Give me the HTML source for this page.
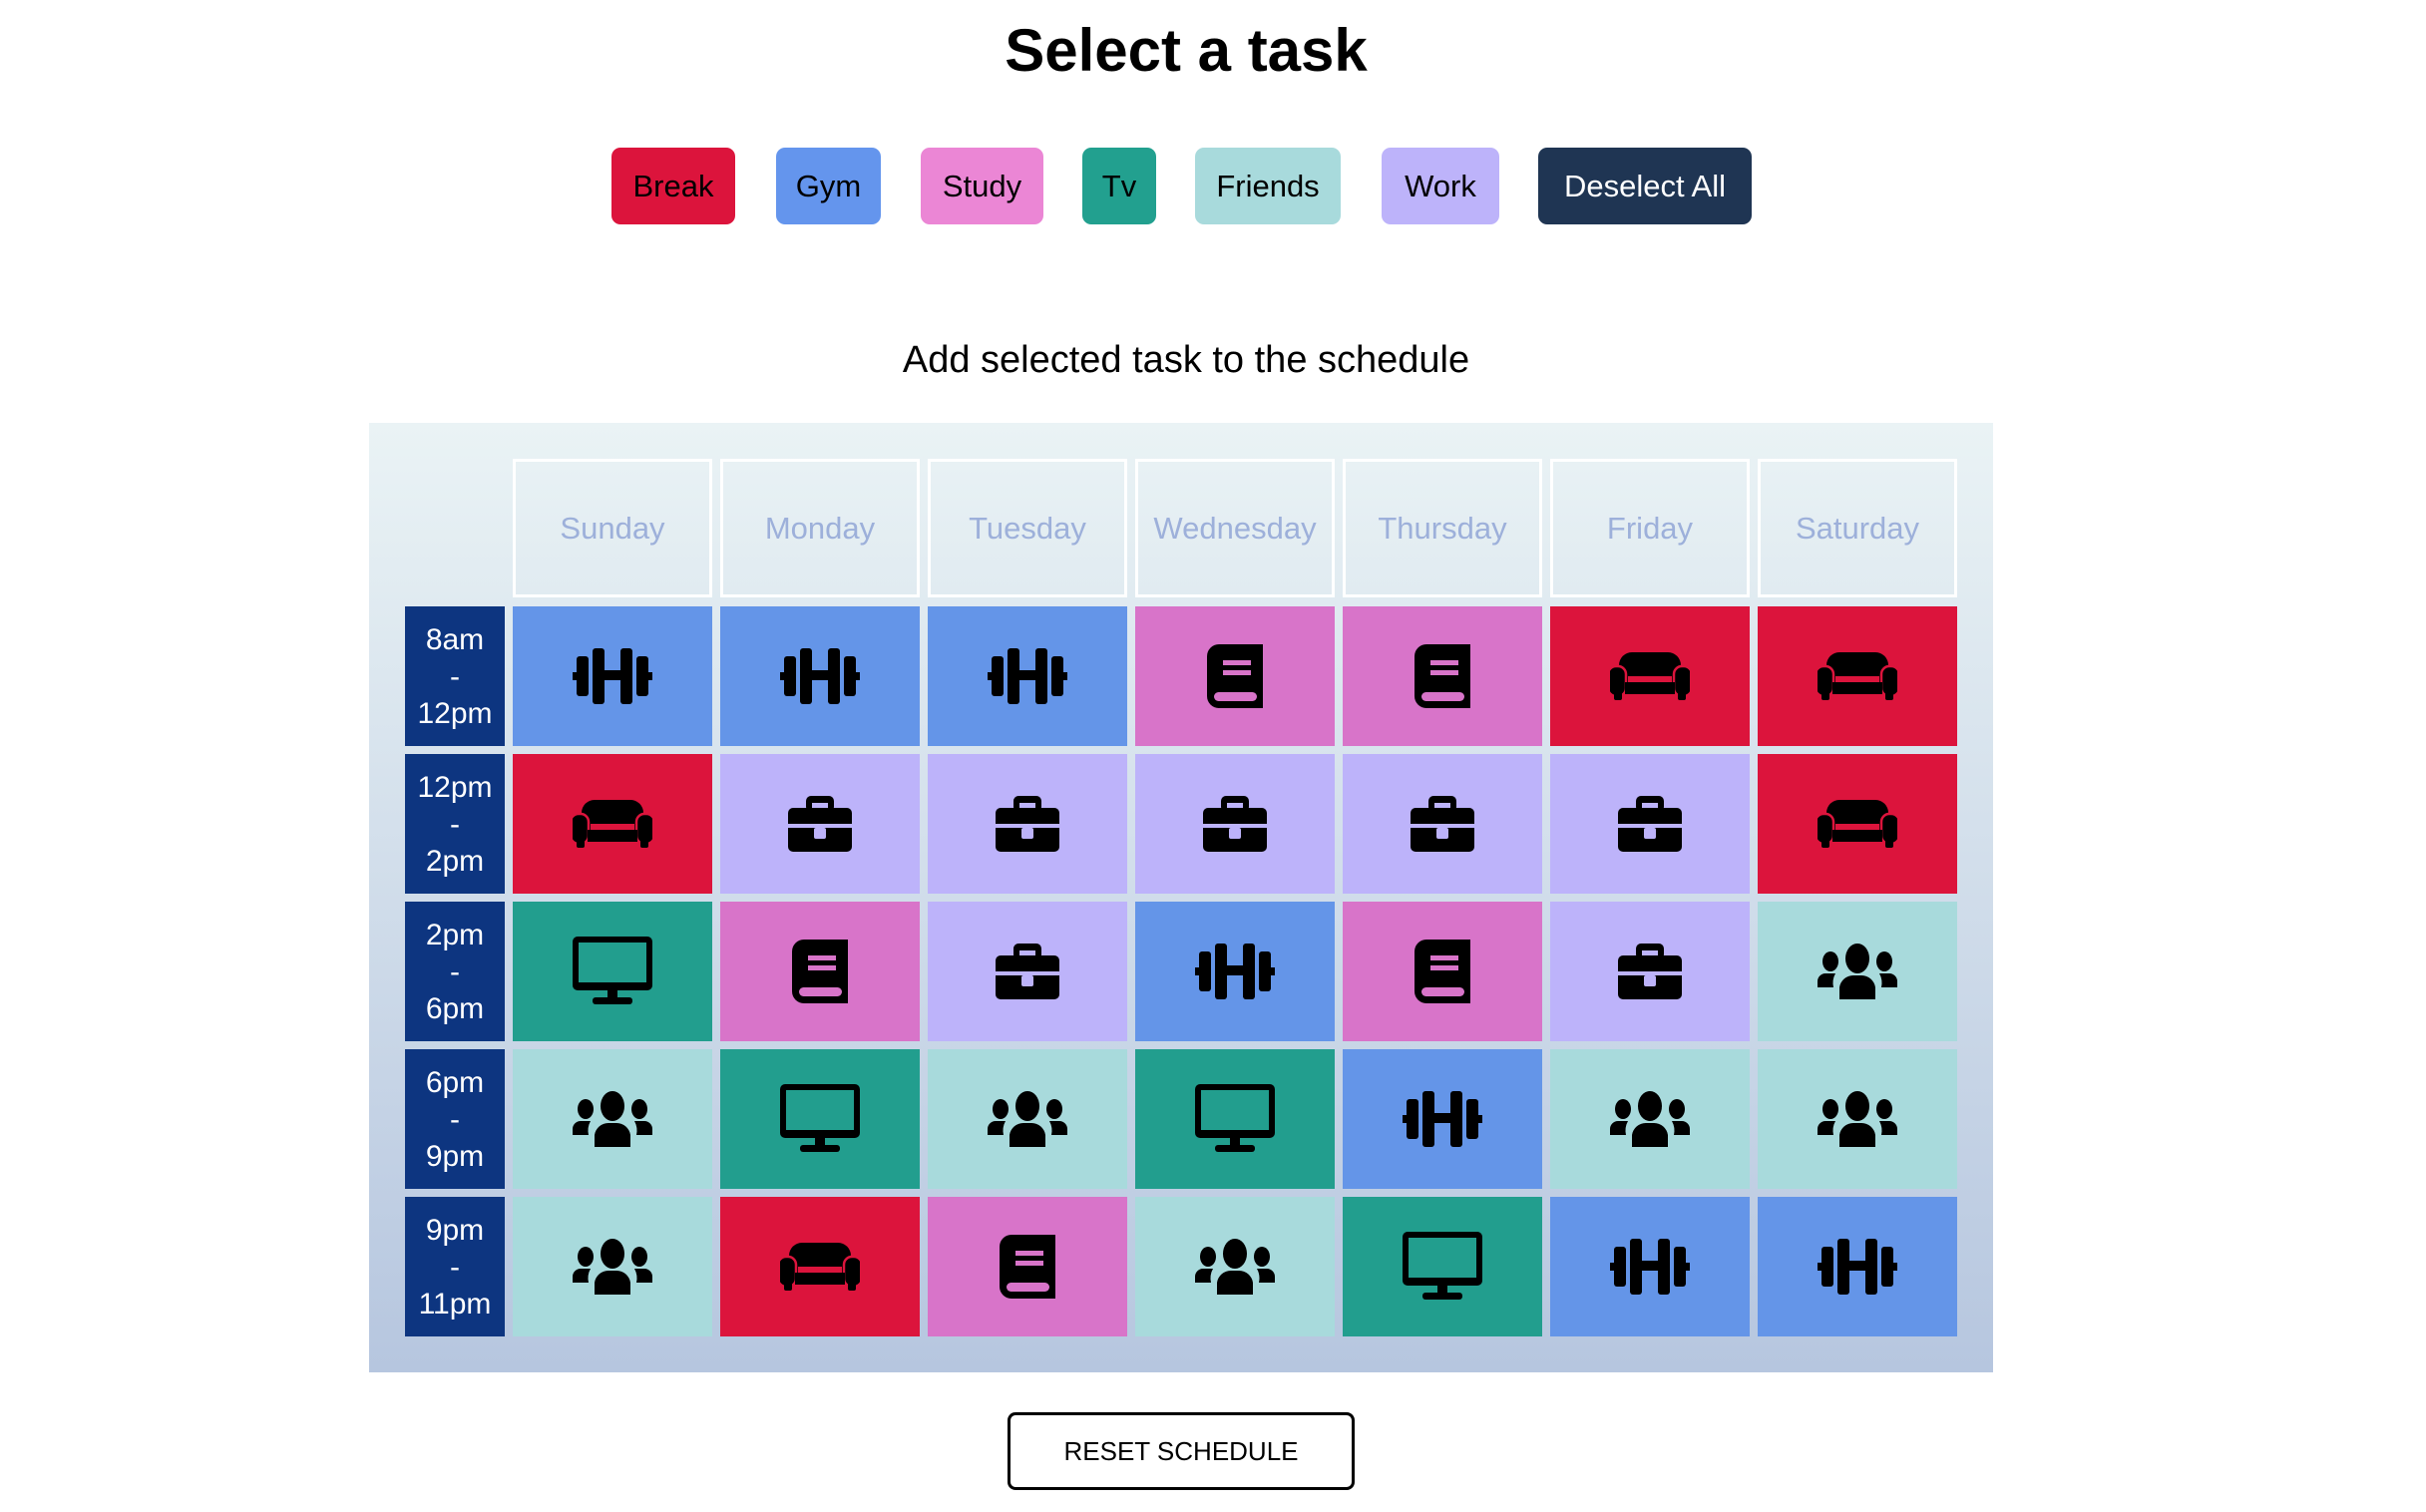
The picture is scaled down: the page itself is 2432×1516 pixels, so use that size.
<!DOCTYPE html>
<html><head><meta charset="utf-8">
<style>
*{margin:0;padding:0;box-sizing:border-box}
body{width:2432px;height:1516px;background:#fff;position:relative;overflow:hidden;font-family:"Liberation Sans",sans-serif}
.title{position:absolute;left:0;width:2378px;top:16px;text-align:center;font-size:60px;font-weight:bold;color:#000}
.btn{position:absolute;top:148px;height:77px;border-radius:9px;font-size:31px;display:flex;align-items:center;justify-content:center;color:#000}
.sub{position:absolute;left:0;width:2378px;top:340px;text-align:center;font-size:38px;color:#000}
.box{position:absolute;left:370px;top:424px;width:1628px;height:952px;background:linear-gradient(#eaf3f5,#b6c6df)}
.hd{position:absolute;top:460px;width:200px;height:139px;border:3px solid #fff;color:#9db0da;font-size:31px;display:flex;align-items:center;justify-content:center}
.tm{position:absolute;left:406px;width:100px;height:140px;background:#0d3580;color:#fff;font-size:30px;line-height:37px;text-align:center;display:flex;flex-direction:column;justify-content:center}
.c{position:absolute;width:200px;height:140px;display:flex;align-items:center;justify-content:center}
.reset{position:absolute;left:1010px;top:1416px;width:348px;height:78px;border:3px solid #000;border-radius:8px;font-size:26px;display:flex;align-items:center;justify-content:center}
</style></head><body>
<svg width="0" height="0" style="position:absolute">
<defs>
<symbol id="gym" viewBox="0 0 80 56"><rect x="0" y="24" width="6" height="8"/><rect x="74" y="24" width="6" height="8"/><rect x="4" y="8" width="12" height="40" rx="3"/><rect x="64" y="8" width="12" height="40" rx="3"/><rect x="20" y="0" width="12" height="56" rx="3"/><rect x="48" y="0" width="12" height="56" rx="3"/><rect x="30" y="22" width="20" height="10"/></symbol>
<symbol id="work" viewBox="0 0 64 56"><rect x="18" y="0" width="28" height="16" rx="5"/><rect x="24" y="7" width="16" height="6" style="fill:var(--bg)"/><rect x="0" y="12" width="64" height="16" rx="5"/><rect x="0" y="20" width="64" height="8"/><rect x="0" y="32" width="64" height="24" rx="5"/><rect x="0" y="32" width="64" height="10"/><rect x="26" y="32" width="12" height="11" rx="2" style="fill:var(--bg)"/></symbol>
<symbol id="break" viewBox="0 0 80 48"><rect x="9" y="0" width="62" height="34" rx="13"/><rect x="18" y="24" width="44" height="6" style="fill:var(--bg)"/><rect x="-2" y="14" width="18" height="30" rx="8" style="stroke:var(--bg);stroke-width:2.5"/><rect x="64" y="14" width="18" height="30" rx="8" style="stroke:var(--bg);stroke-width:2.5"/><rect x="15" y="30" width="50" height="12"/><rect x="4" y="36" width="8" height="12" rx="2"/><rect x="68" y="36" width="8" height="12" rx="2"/></symbol>
<symbol id="study" viewBox="0 0 56 64"><path d="M12 0H56V64H12A12 12 0 0 1 0 52V12A12 12 0 0 1 12 0Z"/><rect x="16" y="16" width="28" height="5" style="fill:var(--bg)"/><rect x="16" y="26" width="28" height="5" style="fill:var(--bg)"/><rect x="7" y="48" width="43" height="9" rx="4.5" style="fill:var(--bg)"/><rect x="50" y="48" width="6" height="9"/></symbol>
<symbol id="tv" viewBox="0 0 80 70"><rect x="0" y="0" width="80" height="54" rx="5"/><rect x="6" y="6" width="68" height="40" style="fill:var(--bg)"/><rect x="35" y="54" width="10" height="10"/><rect x="20" y="61" width="40" height="7" rx="3"/></symbol>
<symbol id="fr" viewBox="0 0 80 56"><ellipse cx="40" cy="15" rx="12" ry="15"/><path d="M22 56V44A14 14 0 0 1 36 32H44A14 14 0 0 1 58 44V56Z"/><ellipse cx="13" cy="18" rx="8" ry="10"/><ellipse cx="67" cy="18" rx="8" ry="10"/><path d="M0 44V38A8 8 0 0 1 8 30H18A20 20 0 0 0 16 44Z"/><path d="M80 44V38A8 8 0 0 0 72 30H62A20 20 0 0 1 64 44Z"/></symbol>
</defs></svg>

<div class="title">Select a task</div>
<div class="btn" style="left:613px;width:124px;background:#dc143c">Break</div>
<div class="btn" style="left:778px;width:105px;background:#6495ed">Gym</div>
<div class="btn" style="left:923px;width:123px;background:#eb86d5">Study</div>
<div class="btn" style="left:1085px;width:74px;background:#22a08f">Tv</div>
<div class="btn" style="left:1198px;width:146px;background:#a8dadc">Friends</div>
<div class="btn" style="left:1385px;width:118px;background:#bdb3fa">Work</div>
<div class="btn" style="left:1542px;width:214px;background:#1f3553;color:#fff">Deselect All</div>
<div class="sub">Add selected task to the schedule</div>
<div class="box"></div>
<div class="hd" style="left:514px">Sunday</div>
<div class="hd" style="left:722px">Monday</div>
<div class="hd" style="left:930px">Tuesday</div>
<div class="hd" style="left:1138px">Wednesday</div>
<div class="hd" style="left:1346px">Thursday</div>
<div class="hd" style="left:1554px">Friday</div>
<div class="hd" style="left:1762px">Saturday</div>
<div id="grid"></div>
<div class="tm" style="top:608px"><div>8am</div><div>-</div><div>12pm</div></div>
<div class="tm" style="top:756px"><div>12pm</div><div>-</div><div>2pm</div></div>
<div class="tm" style="top:904px"><div>2pm</div><div>-</div><div>6pm</div></div>
<div class="tm" style="top:1052px"><div>6pm</div><div>-</div><div>9pm</div></div>
<div class="tm" style="top:1200px"><div>9pm</div><div>-</div><div>11pm</div></div>
<div class="reset">RESET SCHEDULE</div>
<script>
var C={gym:'#6495e8',study:'#d874c9',break:'#dc143c',work:'#bdb3fa',tv:'#229e8e',fr:'#a8dadc'};
var S={gym:[80,56],study:[56,64],break:[80,48],work:[64,56],tv:[80,70],fr:[80,56]};
var G=[['gym','gym','gym','study','study','break','break'],
['break','work','work','work','work','work','break'],
['tv','study','work','gym','study','work','fr'],
['fr','tv','fr','tv','gym','fr','fr'],
['fr','break','study','fr','tv','gym','gym']];
var h='';
G.forEach(function(r,i){r.forEach(function(t,j){
h+='<div class="c" style="left:'+(514+208*j)+'px;top:'+(608+148*i)+'px;background:'+C[t]+';--bg:'+C[t]+'"><svg width="'+S[t][0]+'" height="'+S[t][1]+'"><use href="#'+t+'"/></svg></div>';});});
document.getElementById('grid').innerHTML=h;
</script>
</body></html>
